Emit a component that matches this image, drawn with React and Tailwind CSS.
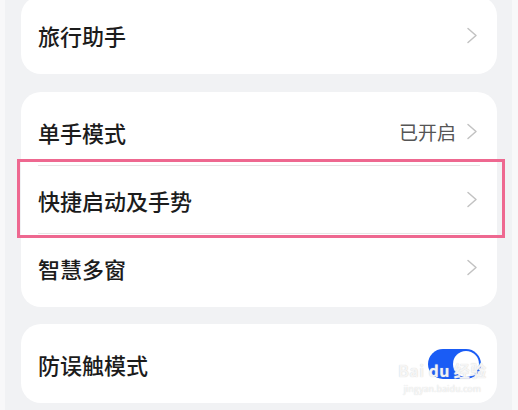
import React from 'react';

const font = { fontFamily: '"Noto Sans CJK SC", "Noto Sans", sans-serif' };

function Chevron() {
    return (
        <svg width="12" height="17" viewBox="0 0 12 17" fill="none" className="shrink-0">
            <path d="M2 1.5 L10 8.5 L2 15.5" stroke="#c2c2c2" strokeWidth="1.5" strokeLinecap="round" strokeLinejoin="round" />
        </svg>
    );
}

function Row({ label, value, className = '' }) {
    return (
        <div className={`flex items-center justify-between ${className}`}>
            <span className="text-[22px] font-medium leading-none text-[#1c1c1c]">{label}</span>
            <div className="flex items-center gap-[10px]">
                {value && <span className="text-[19px] leading-none text-[#555]">{value}</span>}
                <Chevron />
            </div>
        </div>
    );
}

function Toggle() {
    return (
        <div className="flex h-[30px] w-[53px] items-center justify-end rounded-full bg-[#1a5cf5] p-[2px]">
            <div className="h-[26px] w-[26px] rounded-full bg-white" />
        </div>
    );
}

export default function App() {
    return (
        <div className="relative flex h-[410px] w-[518px] overflow-hidden bg-[#f1f2f4]" style={font}>
            <div className="w-[5px] bg-[#f8f8f9]" />
            <div className="flex flex-1 flex-col pl-4 pr-[15px]">
                <div className="-mt-1 h-[78px] rounded-[20px] bg-white pl-[17px] pr-[19px]">
                    <Row label="旅行助手" className="h-full" />
                </div>

                <div className="mt-[18px] rounded-[20px] bg-white py-[6px]">
                    <div className="pl-[17px] pr-[19px]">
                        <Row label="单手模式" value="已开启" className="h-[67px]" />
                    </div>
                    <div className="ml-[17px] mr-[17px] h-px bg-[#e6e6e6]" />
                    <div className="pl-[17px] pr-[19px]">
                        <Row label="快捷启动及手势" className="h-[67px]" />
                    </div>
                    <div className="ml-[17px] mr-[17px] h-px bg-[#e6e6e6]" />
                    <div className="pl-[17px] pr-[19px]">
                        <Row label="智慧多窗" className="h-[67px]" />
                    </div>
                </div>

                <div className="mt-[17px] flex h-[79px] items-center justify-between rounded-[20px] bg-white pl-[17px] pr-[16px]">
                    <span className="text-[22px] font-medium leading-none text-[#1c1c1c]">防误触模式</span>
                    <Toggle />
                </div>
            </div>
            <div className="w-[6px] bg-[#f8f8f9]" />

            {/* pink highlight box */}
            <div className="absolute left-[17px] top-[159px] h-[79px] w-[488px] border-[3px] border-[#ee6890]" />

            {/* watermark */}
            <div className="pointer-events-none absolute left-[398px] top-[362px] flex flex-col items-center leading-none">
                <span className="text-[16px] font-bold tracking-wide text-white/80 [text-shadow:0_0_1px_#c8c8c8]">Bai du 经验</span>
                <span className="mt-[6px] text-[9px] text-white/80 [text-shadow:0_0_1px_#c8c8c8]">jingyan.baidu.com</span>
            </div>
        </div>
    );
}
